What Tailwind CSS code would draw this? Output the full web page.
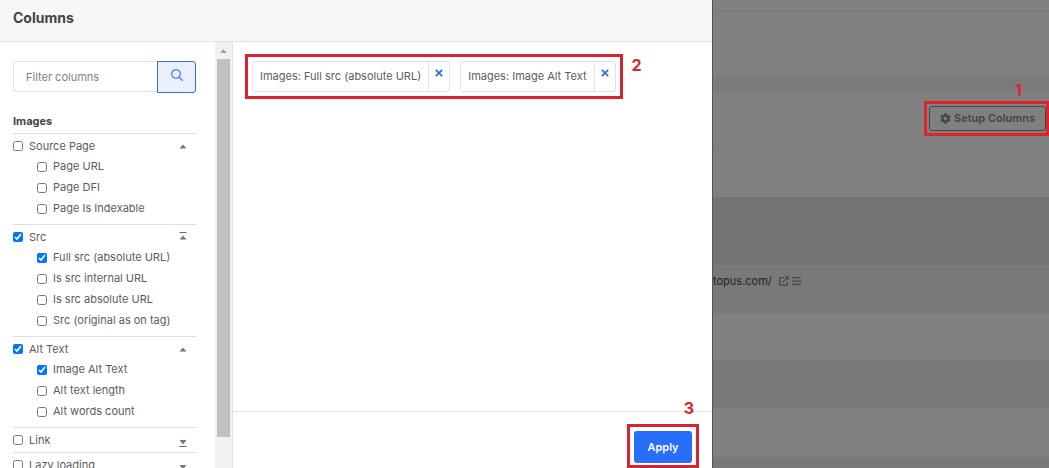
<!DOCTYPE html>
<html lang="en">
  <head>
    <meta charset="UTF-8" />
    <meta name="viewport" content="width=device-width, initial-scale=1.0" />
    <title>Columns</title>
    <script src="https://cdn.jsdelivr.net/npm/@tailwindcss/browser@4"></script>
  </head>
  <body class="flex h-screen overflow-hidden bg-white font-['Inter',sans-serif] text-[11px] text-[#5c5c5c]">
    <!-- Drawer -->
    <div class="flex min-w-0 flex-1 flex-col">
      <header class="flex h-[42px] shrink-0 items-center border-b border-[#e2e2e2] bg-[#f7f7f7] px-[13px] pb-[6px]">
        <h1 class="text-[14px] font-bold text-[#444]">Columns</h1>
      </header>

      <div class="flex min-h-0 flex-1">
        <!-- Column picker -->
        <aside class="flex w-[233px] shrink-0 overflow-hidden border-r border-[#e2e2e2]">
          <div class="min-w-0 flex-1 overflow-hidden pt-[19px] pr-[19px] pl-[13px]">
            <form class="flex h-8" onsubmit="event.preventDefault()">
              <input type="text" aria-label="Filter columns" placeholder="Filter columns" class="mb-px min-w-0 flex-1 rounded-l-[3px] border border-r-0 border-[#e0e0e0] px-3 pt-[2px] outline-none placeholder:text-[#7d8288]" />
              <button type="submit" aria-label="Search" class="flex w-[39px] items-center justify-center rounded-r-[3px] border border-[#3a6fc4] bg-[#e9effd]">
                <svg class="-mt-1 size-3" viewBox="0 0 12 12" fill="none" stroke="#3468d8" stroke-width="1.1" stroke-linecap="round">
                  <circle cx="5" cy="5" r="4.3" />
                  <path d="M8.2 8.2 11.3 11.3" />
                </svg>
              </button>
            </form>

            <h2 class="mt-4 flex h-6 items-center font-bold text-[#444]">Images</h2>

            <div class="border-t border-[#dedede] py-[2px]">
              <div class="flex h-5 items-center">
                <label class="flex flex-1 items-center gap-[6px]"><input type="checkbox" class="size-[10px]" />Source Page</label>
                <button type="button" aria-label="Collapse Source Page" class="mr-[9px]">
                  <svg class="h-4 w-2" viewBox="0 0 8 16"><path d="M4 6.5 7.5 10.5H.5z" fill="#777" /></svg>
                </button>
              </div>
              <ul class="pb-[3px] pl-6">
                <li class="flex h-[21px] items-center"><label class="flex items-center gap-[6px]"><input type="checkbox" class="size-[10px]" />Page URL</label></li>
                <li class="flex h-[21px] items-center"><label class="flex items-center gap-[6px]"><input type="checkbox" class="size-[10px]" />Page DFI</label></li>
                <li class="flex h-[21px] items-center"><label class="flex items-center gap-[6px]"><input type="checkbox" class="size-[10px]" />Page Is Indexable</label></li>
              </ul>
            </div>

            <div class="border-t border-[#dedede] py-[2px]">
              <div class="flex h-5 items-center">
                <label class="flex flex-1 items-center gap-[6px]"><input type="checkbox" checked class="size-[10px]" />Src</label>
                <button type="button" aria-label="Collapse Src" class="mr-[9px]">
                  <svg class="h-4 w-2" viewBox="0 0 8 16"><path d="M4 6.5 7.5 10.5H.5z" fill="#777" /><path d="M.5 3h7v1h-7z" fill="#3570c8" /></svg>
                </button>
              </div>
              <ul class="pb-[3px] pl-6">
                <li class="flex h-[21px] items-center"><label class="flex items-center gap-[6px]"><input type="checkbox" checked class="size-[10px]" />Full src (absolute URL)</label></li>
                <li class="flex h-[21px] items-center"><label class="flex items-center gap-[6px]"><input type="checkbox" class="size-[10px]" />Is src internal URL</label></li>
                <li class="flex h-[21px] items-center"><label class="flex items-center gap-[6px]"><input type="checkbox" class="size-[10px]" />Is src absolute URL</label></li>
                <li class="flex h-[21px] items-center"><label class="flex items-center gap-[6px]"><input type="checkbox" class="size-[10px]" />Src (original as on tag)</label></li>
              </ul>
            </div>

            <div class="border-t border-[#dedede] py-[2px]">
              <div class="flex h-5 items-center">
                <label class="flex flex-1 items-center gap-[6px]"><input type="checkbox" checked class="size-[10px]" />Alt Text</label>
                <button type="button" aria-label="Collapse Alt Text" class="mr-[9px]">
                  <svg class="h-4 w-2" viewBox="0 0 8 16"><path d="M4 6.5 7.5 10.5H.5z" fill="#777" /></svg>
                </button>
              </div>
              <ul class="pb-[3px] pl-6">
                <li class="flex h-[21px] items-center"><label class="flex items-center gap-[6px]"><input type="checkbox" checked class="size-[10px]" />Image Alt Text</label></li>
                <li class="flex h-[21px] items-center"><label class="flex items-center gap-[6px]"><input type="checkbox" class="size-[10px]" />Alt text length</label></li>
                <li class="flex h-[21px] items-center"><label class="flex items-center gap-[6px]"><input type="checkbox" class="size-[10px]" />Alt words count</label></li>
              </ul>
            </div>

            <div class="border-t border-[#dedede] py-[2px]">
              <div class="flex h-5 items-center">
                <label class="flex flex-1 items-center gap-[6px]"><input type="checkbox" class="size-[10px]" />Link</label>
                <button type="button" aria-label="Expand Link" class="mr-[9px]">
                  <svg class="h-4 w-2" viewBox="0 0 8 16"><path d="M.5 8h7L4 12.5z" fill="#777" /><path d="M.5 14h7v1h-7z" fill="#3570c8" /></svg>
                </button>
              </div>
            </div>

            <div class="border-t border-[#dedede] py-[2px]">
              <div class="flex h-5 items-center">
                <label class="flex flex-1 items-center gap-[6px]"><input type="checkbox" class="size-[10px]" />Lazy loading</label>
                <button type="button" aria-label="Expand Lazy loading" class="mr-[9px]">
                  <svg class="h-4 w-2" viewBox="0 0 8 16"><path d="M.5 8h7L4 12.5z" fill="#777" /></svg>
                </button>
              </div>
            </div>
          </div>

          <!-- Scrollbar -->
          <div class="flex w-[17px] flex-col items-center bg-[#f1f1f1]">
            <svg class="h-[17px] w-[17px] shrink-0" viewBox="0 0 17 17"><path d="M8.5 7 12 11H5z" fill="#a3a3a3" /></svg>
            <div class="mb-[31px] w-[13px] flex-1 bg-[#c1c1c1]"></div>
          </div>
        </aside>

        <!-- Selected columns -->
        <main class="flex min-w-0 flex-1 flex-col">
          <div class="flex-1 p-[19px]">
            <div class="relative flex w-fit gap-[10px]">
              <div class="flex h-[31px] rounded-[3px] border border-[#e2e2e2]">
                <span class="flex items-center px-[7px] whitespace-nowrap">Images: Full src (absolute URL)</span>
                <button type="button" aria-label="Remove Full src" class="flex w-[21px] justify-center border-l border-[#e2e2e2] pt-[7px]">
                  <svg class="size-2" viewBox="0 0 8 8" stroke="#2a6be0" stroke-width="1.7"><path d="M.8.8 7.2 7.2M7.2.8.8 7.2" /></svg>
                </button>
              </div>
              <div class="flex h-[31px] rounded-[3px] border border-[#e2e2e2]">
                <span class="flex items-center px-[7px] whitespace-nowrap">Images: Image Alt Text</span>
                <button type="button" aria-label="Remove Image Alt Text" class="flex w-[21px] justify-center border-l border-[#e2e2e2] pt-[7px]">
                  <svg class="size-2" viewBox="0 0 8 8" stroke="#2a6be0" stroke-width="1.7"><path d="M.8.8 7.2 7.2M7.2.8.8 7.2" /></svg>
                </button>
              </div>
              <div class="pointer-events-none absolute -inset-[7px] border-3 border-[#d9232e]"></div>
              <span class="absolute -top-2 left-full ml-4 text-[16px] leading-6 font-bold text-[#d9232e]">2</span>
            </div>
          </div>
          <footer class="flex h-[57px] justify-end border-t border-[#e2e2e2] pt-[19px] pr-5">
            <div class="relative h-8">
              <button type="button" class="h-8 w-[58px] rounded-[3px] bg-[#276efb] text-[11px] font-semibold text-white">Apply</button>
              <div class="pointer-events-none absolute -inset-x-[7px] -top-[7px] -bottom-[5px] border-3 border-[#d9232e]"></div>
              <span class="absolute -right-[2px] bottom-full mb-[11px] text-[16px] leading-6 font-bold text-[#d9232e]">3</span>
            </div>
          </footer>
        </main>
      </div>
    </div>

    <!-- Dimmed page behind the drawer -->
    <div class="flex w-[337px] shrink-0 flex-col overflow-hidden border-l border-[#555] bg-[#808080]">
      <div class="h-[11px] shrink-0 border-b border-[#777]"></div>
      <div class="h-[66px] shrink-0"></div>
      <div class="h-4 shrink-0 bg-[#7b7b7b]"></div>
      <div class="flex h-[53px] shrink-0 items-center justify-end border-b border-[#7a7a7a] pr-[3px] pb-px">
        <div class="relative">
          <button type="button" class="flex h-[25px] w-[117px] items-center justify-center gap-[3px] rounded-[3px] border border-[#45484c] font-semibold whitespace-nowrap text-[#434548]">
            <svg class="size-[11px]" viewBox="0 0 512 512" fill="#45484c"><path d="M487.400 315.700l-42.600-24.600c4.300-23.200 4.300-47 0-70.200l42.600-24.600c4.900-2.800 7.100-8.600 5.500-14-11.100-35.600-30-67.800-54.700-94.600-3.800-4.100-10-5.100-14.800-2.300L380.800 110c-17.900-15.400-38.500-27.300-60.800-35.100V25.800c0-5.600-3.900-10.500-9.400-11.700-36.700-8.200-74.300-7.800-109.200 0-5.500 1.200-9.400 6.100-9.400 11.700V75c-22.200 7.900-42.800 19.800-60.800 35.100L88.700 85.500c-4.900-2.800-11-1.900-14.800 2.300-24.700 26.700-43.600 58.900-54.700 94.600-1.700 5.400.6 11.200 5.500 14L67.300 221c-4.300 23.200-4.300 47 0 70.200l-42.600 24.600c-4.900 2.800-7.100 8.600-5.500 14 11.100 35.600 30 67.800 54.700 94.600 3.800 4.100 10 5.100 14.800 2.300l42.600-24.600c17.900 15.400 38.500 27.300 60.800 35.100v49.200c0 5.600 3.900 10.500 9.400 11.700 36.700 8.200 74.300 7.800 109.200 0 5.500-1.200 9.400-6.100 9.400-11.700v-49.200c22.200-7.900 42.800-19.800 60.800-35.100l42.600 24.600c4.900 2.800 11 1.900 14.800-2.300 24.700-26.700 43.600-58.900 54.700-94.600 1.500-5.500-.7-11.300-5.600-14.100zM256 336c-44.100 0-80-35.900-80-80s35.900-80 80-80 80 35.900 80 80-35.900 80-80 80z" /></svg>
            Setup Columns
          </button>
          <div class="pointer-events-none absolute -inset-y-[5px] -right-[3px] -left-[5px] border-3 border-[#e0222b]"></div>
          <span class="absolute right-6 bottom-full mb-1 text-[16px] leading-6 font-bold text-[#e0222b]">1</span>
        </div>
      </div>
      <div class="h-[51px] shrink-0"></div>
      <div class="h-[68px] shrink-0 bg-[#737373]"></div>
      <div class="flex h-12 shrink-0 items-start bg-[#797979] pt-2 leading-4 text-[#222]">
        <span>topus.com/</span>
        <a href="#" aria-label="Open page" class="mt-[3px] ml-[7px]">
          <svg class="size-[10px]" viewBox="0 0 10 10" fill="none" stroke="#484848" stroke-width="1.3"><path d="M5 1.700H.8v7.500h7.400V5.500M3.400 6.400 9 .9M6 .8h3.200V4" /></svg>
        </a>
        <button type="button" aria-label="Row menu" class="mt-[3px] ml-[3px]">
          <svg class="h-[10px] w-[9px]" viewBox="0 0 9 10" fill="#484848"><path d="M0 1h9v1.300H0zM0 4.400h9v1.300H0zM0 7.800h9v1.300H0z" /></svg>
        </button>
      </div>
      <div class="h-[47px] shrink-0"></div>
      <div class="h-12 shrink-0 bg-[#787878]"></div>
      <div class="h-[49px] shrink-0"></div>
      <div class="flex-1 bg-[#797979]"></div>
    </div>
  </body>
</html>
